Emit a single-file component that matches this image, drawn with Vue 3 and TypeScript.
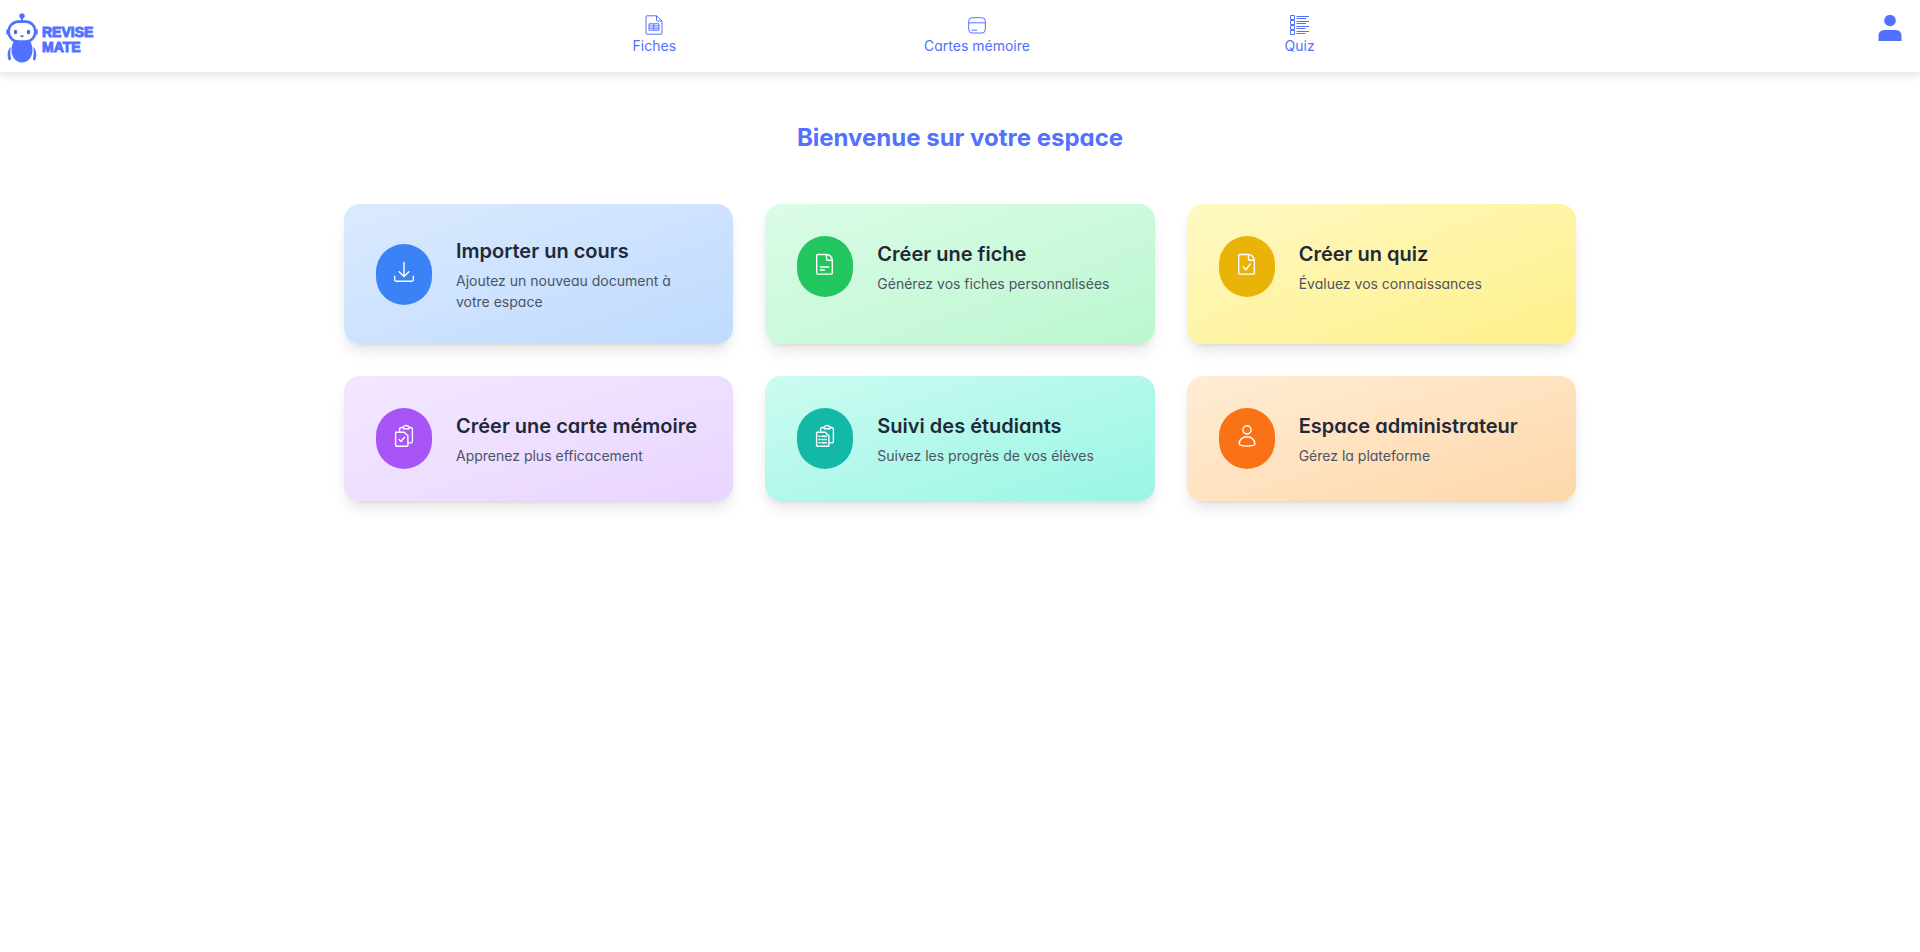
<script setup lang="ts">
type CardIcon = 'download' | 'sheet' | 'check' | 'clipCheck' | 'clipList' | 'person'

interface Card {
  title: string
  text: string
  tone: string
  icon: CardIcon
}

const cards: Card[] = [
  { title: 'Importer un cours', text: 'Ajoutez un nouveau document à votre espace', tone: 'blue', icon: 'download' },
  { title: 'Créer une fiche', text: 'Générez vos fiches personnalisées', tone: 'green', icon: 'sheet' },
  { title: 'Créer un quiz', text: 'Évaluez vos connaissances', tone: 'yellow', icon: 'check' },
  { title: 'Créer une carte mémoire', text: 'Apprenez plus efficacement', tone: 'purple', icon: 'clipCheck' },
  { title: 'Suivi des étudiants', text: 'Suivez les progrès de vos élèves', tone: 'teal', icon: 'clipList' },
  { title: 'Espace administrateur', text: 'Gérez la plateforme', tone: 'orange', icon: 'person' },
]

const sheet = 'M13.500 2.500H4.500a.8.800 0 0 0-.8.800v18a.8.800 0 0 0 .8.800h14a.8.800 0 0 0 .8-.8V8.300C19.300 5 16.500 2.500 13.500 2.500v4.800a1 1 0 0 0 1 1h4.800'
const clipboard =
  'M4.300 8.200h7.900l3.700 3.600v9.700a.7.700 0 0 1-.7.700H4.300a.7.700 0 0 1-.7-.7V8.900a.7.700 0 0 1 .7-.7zM7.600 8V5a1.500 1.500 0 0 1 1.500-1.500h2.200M17 3.500h1.900A1.500 1.500 0 0 1 20.400 5v12.400a1.500 1.500 0 0 1-1.500 1.500h-2.700M11.300 2.900c0-.5.400-.8.900-.8h.7c.3-.8 2.200-.8 2.500 0h.7c.5 0 .9.300.9.800v1.800h-5.700z'

const iconPaths: Record<CardIcon, string> = {
  download: 'M12 2.500v14M7 11.700l5 4.800 5-4.800M2.700 16.300v3.200a1.800 1.800 0 0 0 1.800 1.800h15a1.800 1.800 0 0 0 1.800-1.800v-3.200',
  sheet: `${sheet}M7.300 15h8.500M7.300 18h4.200`,
  check: `${sheet}M8.300 15l2.500 2.700 4.500-5.800`,
  clipCheck: `${clipboard}M7 15.400l1.900 2.100 3.600-4.300`,
  clipList: `${clipboard}M6 12.300h1M8.800 12.300h4.700M6 15.500h1M8.800 15.500h4.700M6 18.700h1M8.800 18.700h4.700`,
  person: 'M16.100 5.900a4.100 4.100 0 1 1-8.200 0 4.100 4.100 0 0 1 8.200 0zM12 12.700c4.700 0 7.700 3.400 7.900 7.100 0 1.300-3 2.300-7.900 2.300s-7.900-1-7.900-2.300c.2-3.700 3.200-7.100 7.900-7.100z',
}
</script>

<template>
  <div class="page">
    <header class="topbar">
      <a class="brand" href="#" aria-label="Revise Mate">
        <svg class="robot" viewBox="0 0 32 50" aria-hidden="true">
          <g fill="#5271ff">
            <circle cx="16" cy="3" r="2.700" />
            <path d="M15 5h2v4h-2z" />
            <path d="M8.500 27.500h15c2 2.500 3 6 3 9.500 0 7.500-4.500 12.500-10.500 12.500S5.500 44.500 5.500 37c0-3.500 1-7 3-9.500z" />
            <path d="M4.800 34C1.500 36.500.6 43 3 47.500c1-.2 1.700-.7 2.200-1.500-1-3.500-1.200-8-.4-12zM27.200 34c3.300 2.500 4.200 9 1.800 13.500-1-.2-1.700-.7-2.200-1.500 1-3.500 1.200-8 .4-12z" />
          </g>
          <rect x="2.800" y="8.600" width="26.400" height="20" rx="9.500" fill="#fff" stroke="#5271ff" stroke-width="2.600" />
          <path d="M1.300 16.500v5M30.700 16.500v5M6 11.500c4-4.500 16-4.500 20 0" fill="none" stroke="#5271ff" stroke-width="2" />
          <g fill="#4a63d8">
            <ellipse cx="9.500" cy="19" rx="1.700" ry="2.200" />
            <ellipse cx="22.500" cy="19" rx="1.700" ry="2.200" />
            <path d="M14 22.500h4c-.5 2.200-3.500 2.200-4 0z" />
          </g>
        </svg>
        <span class="wordmark"><span>REVISE</span><span>MATE</span></span>
      </a>

      <nav class="menu" aria-label="Navigation principale">
        <a href="#">
          <svg viewBox="0 0 20 20" aria-hidden="true">
            <path d="M12.500.8H3a1 1 0 0 0-1 1v16.400a1 1 0 0 0 1 1h14a1 1 0 0 0 1-1V6L12.500.8V5a1 1 0 0 0 1 1H18M5 8.800h10v6.400H5zM5 11h10M5 13.200h10M9.800 8.800v6.400" />
          </svg>
          <span>Fiches</span>
        </a>
        <a href="#">
          <svg viewBox="0 0 20 20" aria-hidden="true">
            <rect x="1.700" y="2.700" width="16.600" height="15.300" rx="3.500" />
            <path d="M1.700 7.800h16.600M4.500 15.200H10" />
          </svg>
          <span>Cartes mémoire</span>
        </a>
        <a href="#">
          <svg viewBox="0 0 20 20" aria-hidden="true">
            <path d="M.5.500h4v4h-4zM.5 5.500h4v4h-4zM.5 10.500h4v4h-4zM.5 15.500h4v4h-4z" />
            <path d="M6.500 1.500H19M6.500 3.500h9.500M6.500 6.500H19M6.500 8.500h9.500M6.500 11.500H19M6.500 13.500h9M6.500 16.500H19M6.500 18.500h9" />
          </svg>
          <span>Quiz</span>
        </a>
      </nav>

      <button class="account" type="button" aria-label="Mon compte">
        <svg viewBox="0 0 32 32" aria-hidden="true">
          <circle cx="16" cy="8.500" r="5.800" />
          <path d="M4.500 29v-5.500a5.500 5.500 0 0 1 5.500-5.500h12a5.500 5.500 0 0 1 5.500 5.500V29z" />
        </svg>
      </button>
    </header>

    <main class="content">
      <h1>Bienvenue sur votre espace</h1>
      <div class="cards">
        <a v-for="card in cards" :key="card.title" class="card" :class="card.tone" href="#">
          <span class="card-body">
            <span class="badge">
              <svg viewBox="0 0 24 24" aria-hidden="true"><path :d="iconPaths[card.icon]" /></svg>
            </span>
            <span class="card-text">
              <strong>{{ card.title }}</strong>
              <span>{{ card.text }}</span>
            </span>
          </span>
        </a>
      </div>
    </main>
  </div>
</template>

<style>
body {
  margin: 0;
  background: #fff;
}
</style>

<style scoped>
.page {
  font-family: Inter, "Liberation Sans", sans-serif;
  font-feature-settings: "cv11";
  color: #1f2937;
}

a {
  color: inherit;
  text-decoration: none;
}

.topbar {
  display: flex;
  justify-content: space-between;
  height: 72px;
  box-shadow: 0 4px 8px rgba(0, 0, 0, 0.1);
}

.brand {
  box-sizing: border-box;
  display: flex;
  align-items: flex-start;
  gap: 4px;
  width: 100px;
  padding: 13px 0 0 6px;
}

.robot {
  flex: none;
  width: 32px;
  height: 50px;
}

.wordmark {
  display: flex;
  flex-direction: column;
  margin-top: 12px;
  color: #5271ff;
  font: 700 14px/15px "Liberation Sans", sans-serif;
  -webkit-text-stroke: 1px #5271ff;
}

.menu {
  display: grid;
  grid-template-columns: repeat(3, 1fr);
  gap: 8px;
  width: 50%;
  padding-top: 15px;
  color: #5271ff;
  font-size: 14px;
  line-height: 21px;
}

.menu a {
  display: flex;
  flex-direction: column;
  align-items: center;
}

.menu svg {
  width: 20px;
  height: 20px;
  fill: none;
  stroke: currentColor;
  stroke-width: 1;
}

.account {
  display: flex;
  align-items: flex-start;
  width: 66px;
  padding: 12px 14px 0 20px;
  border: 0;
  background: none;
  cursor: pointer;
}

.account svg {
  width: 32px;
  height: 32px;
  fill: #5271ff;
}

.content {
  max-width: 1232px;
  margin: 0 auto;
  padding: 48px 24px;
}

h1 {
  margin: 0 0 48px;
  color: #5271ff;
  font-size: 24px;
  font-weight: 700;
  line-height: 36px;
  text-align: center;
}

.cards {
  display: grid;
  grid-template-columns: repeat(3, 1fr);
  gap: 32px;
}

.card {
  padding: 32px;
  border-radius: 16px;
  background: linear-gradient(to bottom right, var(--from), var(--to));
  box-shadow: 0 10px 15px -3px rgba(0, 0, 0, 0.1), 0 4px 6px -4px rgba(0, 0, 0, 0.1);
}

.card-body {
  display: flex;
  align-items: center;
  gap: 24px;
}

.badge {
  flex: none;
  padding: 16px 16px 21px;
  border-radius: 9999px;
  background: var(--badge);
}

.badge svg {
  display: block;
  width: 24px;
  height: 24px;
  fill: none;
  stroke: #fff;
  stroke-width: 1.4;
  stroke-linecap: round;
  stroke-linejoin: round;
}

.card-text {
  display: flex;
  flex-direction: column;
  gap: 4px;
  color: #4b5563;
  font-size: 14px;
  line-height: 21px;
}

.card-text strong {
  color: #1f2937;
  font-size: 20px;
  font-weight: 600;
  line-height: 30px;
}

.blue { --from: #dbeafe; --to: #bfdbfe; --badge: #3b82f6; }
.green { --from: #dcfce7; --to: #bbf7d0; --badge: #22c55e; }
.yellow { --from: #fef9c3; --to: #fef08a; --badge: #eab308; }
.purple { --from: #f3e8ff; --to: #e9d5ff; --badge: #a855f7; }
.teal { --from: #ccfbf1; --to: #99f6e4; --badge: #14b8a6; }
.orange { --from: #ffedd5; --to: #fed7aa; --badge: #f97316; }

@media (max-width: 900px) {
  .cards {
    grid-template-columns: 1fr;
  }
}
</style>
